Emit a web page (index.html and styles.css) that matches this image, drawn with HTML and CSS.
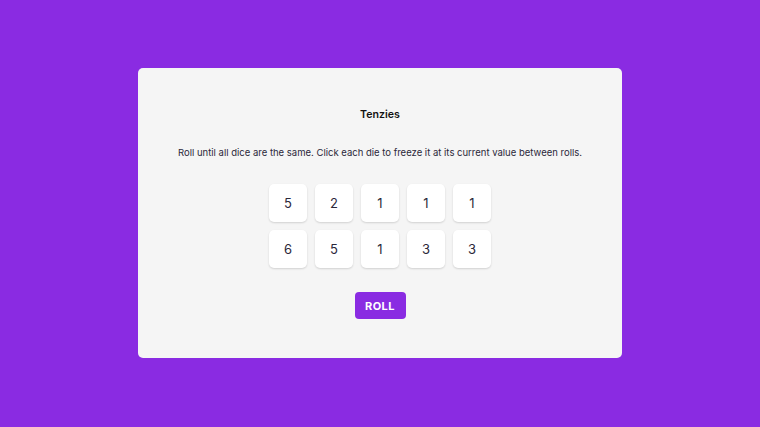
FILE: index.html
```html
<!DOCTYPE html>
<html>
<head>
<meta charset="utf-8">
<link rel="stylesheet" href="styles.css">
</head>
<body>
<main class="card">
  <h1 class="title">Tenzies</h1>
  <p class="instructions">Roll until all dice are the same. Click each die to freeze it at its current value between rolls.</p>
  <div class="dice">
    <button class="die">5</button>
    <button class="die">2</button>
    <button class="die">1</button>
    <button class="die">1</button>
    <button class="die">1</button>
    <button class="die">6</button>
    <button class="die">5</button>
    <button class="die">1</button>
    <button class="die">3</button>
    <button class="die">3</button>
  </div>
  <button class="roll">ROLL</button>
</main>
</body>
</html>
```

FILE: styles.css
```css
* { box-sizing: border-box; }
html, body { height: 100%; }
body {
  margin: 0;
  padding-bottom: 1px;
  background: #8a2be2;
  font-family: Inter, "Noto Sans", sans-serif;
  display: flex;
  align-items: center;
  justify-content: center;
}
.card {
  width: 484px;
  height: 290px;
  background: #f5f5f5;
  border-radius: 5px;
  display: flex;
  flex-direction: column;
  align-items: center;
  padding-top: 39px;
}
.title {
  margin: 0;
  font-size: 10.6px;
  font-weight: 600;
  color: #111;
  line-height: 15px;
}
.instructions {
  margin: 24px 0 0;
  font-size: 9.5px;
  line-height: 14px;
  color: #2b283a;
}
.dice {
  margin-top: 24px;
  display: grid;
  grid-template-columns: repeat(5, 38px);
  gap: 8px;
}
.die {
  width: 38px;
  height: 38px;
  border: none;
  border-radius: 5px;
  background: #fff;
  box-shadow: 0 1px 2px rgba(0,0,0,0.15);
  font-family: Inter, "Noto Sans", sans-serif;
  font-size: 13px;
  color: #2b283a;
  padding: 0;
}
.roll {
  margin-top: 24px;
  width: 51px;
  height: 27px;
  border: none;
  border-radius: 4px;
  background: #8a2be2;
  color: #fff;
  font-family: Inter, "Noto Sans", sans-serif;
  font-size: 11px;
  font-weight: 700;
  letter-spacing: 0.5px;
  padding: 0;
}
```
